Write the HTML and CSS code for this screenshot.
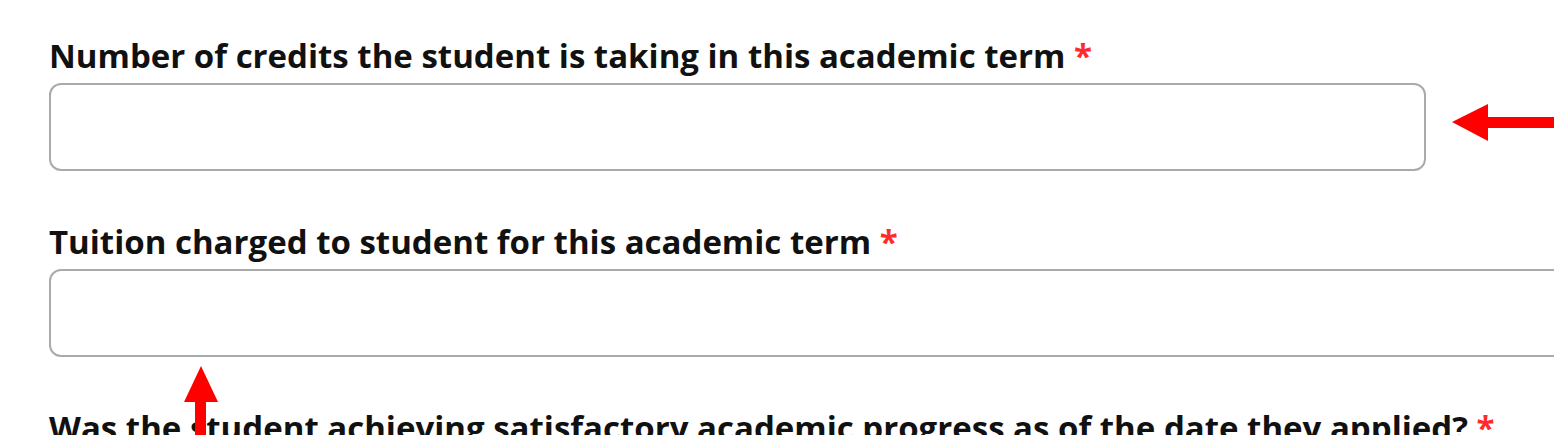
FILE: index.html
```html
<!DOCTYPE html>
<html lang="en">
<head>
    <meta charset="UTF-8">
    <meta name="viewport" content="width=device-width, initial-scale=1.0">
    <title>Student Enrollment</title>
    <link rel="stylesheet" href="styles.css">
</head>
<body>

    <div class="form">
        <div class="form-group">
            <label for="credits">Number of credits the student is taking in this academic term <span class="required">*</span></label>
            <input type="text" id="credits" class="short">
        </div>

        <div class="form-group">
            <label for="tuition">Tuition charged to student for this academic term <span class="required">*</span></label>
            <input type="text" id="tuition" class="wide">
        </div>

        <div class="form-group">
            <label>Was the student achieving satisfactory academic progress as of the date they applied? <span class="required">*</span></label>
        </div>
    </div>

    <!-- annotation arrows -->
    <svg class="arrow arrow-left" width="104" height="40" viewBox="0 0 104 40">
        <polygon points="0,18 36,0 36,13 104,13 104,24 36,24 36,37" fill="#ff0000"/>
    </svg>
    <svg class="arrow arrow-up" width="36" height="70" viewBox="0 0 36 70">
        <polygon points="18,0 35,36 23,36 23,70 12,70 12,36 1,36" fill="#ff0000"/>
    </svg>

</body>
</html>
```

FILE: styles.css
```css
body {
    font-family: "Open Sans", "Noto Sans", sans-serif;
    margin: 0;
    background-color: #ffffff;
    overflow: hidden;
    position: relative;
    height: 435px;
}

.form {
    padding: 37px 0 0 49px;
}

.form-group {
    margin-bottom: 52px;
}

.form-group label {
    display: block;
    margin-bottom: 8px;
    font-size: 33px;
    line-height: 38px;
    font-weight: bold;
    color: #111;
    white-space: nowrap;
}

.required {
    color: #ff2a2a;
}

.form-group input {
    display: block;
    box-sizing: border-box;
    height: 88px;
    border: 2px solid #aaaaaa;
    border-radius: 12px;
    background-color: #ffffff;
    font-size: 24px;
    padding: 0 14px;
}

.form-group input.short {
    width: 1377px;
}

.form-group input.wide {
    width: 1600px;
}

.arrow {
    position: absolute;
}

.arrow-left {
    left: 1452px;
    top: 104px;
}

.arrow-up {
    left: 183px;
    top: 366px;
}
```
